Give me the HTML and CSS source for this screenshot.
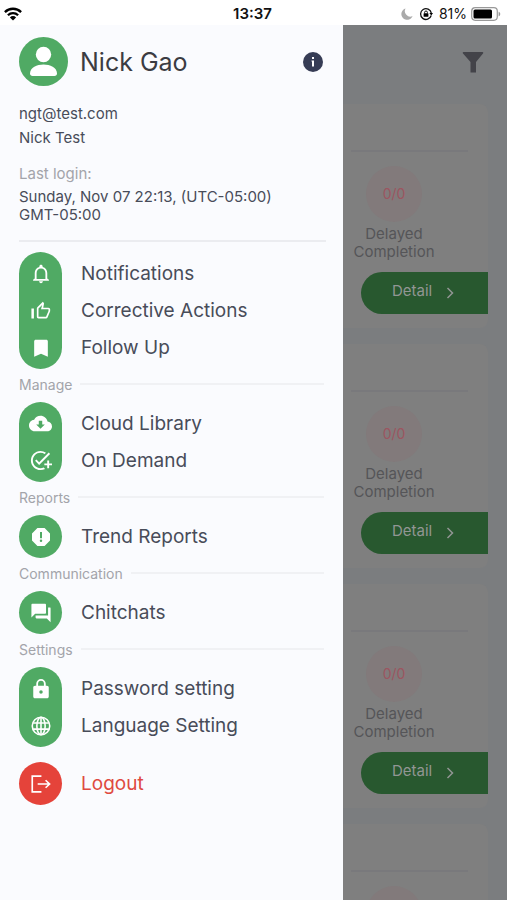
FILE: index.html
```html
<!DOCTYPE html>
<html lang="en">
<head>
<meta charset="utf-8">
<meta name="viewport" content="width=device-width, initial-scale=1">
<title>Account menu</title>
<link rel="stylesheet" href="styles.css">
</head>
<body>
<header class="status">
  <svg class="wifi" viewBox="0 0 18 14" width="18" height="14" aria-label="Wi-Fi"><g fill="none" stroke="#000" stroke-width="2.3"><path d="M.9 5.1a11.5 11.5 0 0 1 16.200 0"/><path d="M3.900 8.300a7.300 7.300 0 0 1 10.200 0"/></g><path d="M9 13.500 5.900 10.400a4.400 4.400 0 0 1 6.200 0z"/></svg>
  <time class="clock">13:37</time>
  <div class="status-right">
    <svg viewBox="0 0 12 12" width="12" height="12" aria-label="Do not disturb"><path fill="#aaa" d="M4.500.5A5.800 5.800 0 1 0 11.600 8.100 5.500 5.500 0 0 1 4.500.5z"/></svg>
    <svg class="lock-rot" viewBox="0 0 14 14" width="14" height="14" aria-label="Rotation lock"><path d="M12.200 8.500A5.400 5.400 0 1 1 12.300 6" fill="none" stroke="#111" stroke-width="1.300"/><path d="M10.400 6h3.600l-1.700 2.500z"/><rect x="4.600" y="6.300" width="4.800" height="3.500" rx=".5"/><path d="M5.600 6.500V5.400a1.400 1.400 0 0 1 2.800 0v1.100" fill="none" stroke="#111"/></svg>
    <span>81%</span>
    <svg viewBox="0 0 30 14" width="30" height="14" aria-label="Battery"><rect x=".7" y=".7" width="25.600" height="12.600" rx="3.500" fill="#fff" stroke="#999" stroke-width="1.200"/><rect x="2.500" y="2.500" width="18.500" height="9" rx="1.500"/><path d="M27.600 4.700c2.200.7 2.200 3.900 0 4.600z" fill="#999"/></svg>
  </div>
</header>
<div class="app">
  <aside class="drawer">
    <div class="profile">
      <svg class="avatar" viewBox="0 0 49 49" width="49" height="49" aria-hidden="true"><circle cx="24.500" cy="24.500" r="24.500" fill="#50aa64"/><circle cx="24.500" cy="17.500" r="7.700" fill="#fff"/><path d="M11 36.500c0-6 7-9 13.500-9s13.500 3 13.500 9c0 1.500-1 2.500-2.500 2.500h-22c-1.500 0-2.500-1-2.500-2.500z" fill="#fff"/></svg>
      <h1>Nick Gao</h1>
      <button class="info" type="button" aria-label="Information"><svg viewBox="0 0 20 20" width="20" height="20"><circle cx="10" cy="10" r="10" fill="#363c55"/><rect x="9" y="5" width="2" height="2" fill="#fff"/><path d="M8.500 8.500H11v6H9V9.500h-.5z" fill="#fff"/></svg></button>
    </div>
    <div class="details">
      <p>ngt@test.com</p>
      <p>Nick Test</p>
      <p class="muted">Last login:</p>
      <p class="login">Sunday, Nov 07 22:13, (UTC-05:00)<br>GMT-05:00</p>
    </div>
    <nav>
      <ul class="group">
        <li><a href="#notifications"><svg viewBox="0 0 24 24"><path d="M12 23c1.300 0 2.300-1 2.300-2.300H9.700C9.700 22 10.700 23 12 23zm7.500-5.500v-6.800c0-3.600-2-6.400-5.500-7.200V2.700C14 1.600 13.100.8 12 .8s-2 .8-2 1.900v.8c-3.500.8-5.500 3.600-5.500 7.200v6.800l-2 1.500v1h19v-1zm-2.200.5H6.700v-7.300c0-3.100 2.100-5.300 5.300-5.300s5.300 2.200 5.300 5.300z"/></svg><span>Notifications</span></a></li>
        <li><a href="#actions"><svg viewBox="0 0 24 24"><path d="M9 21h9c.83 0 1.540-.5 1.840-1.220l3.020-7.050c.09-.23.14-.47.14-.73v-2c0-1.100-.9-2-2-2h-6.310l.95-4.570.03-.32c0-.41-.17-.79-.44-1.060L14.170 1 7.580 7.590C7.220 7.950 7 8.450 7 9v10c0 1.100.9 2 2 2zM9 9l4.340-4.340L12 10h9v2l-3 7H9V9zM.5 9h3v12h-3z"/></svg><span>Corrective Actions</span></a></li>
        <li><a href="#follow"><svg viewBox="0 0 24 24"><path d="M18 2H6C4.500 2 3.800 2.800 3.800 4v18.500L12 18.800l8.200 3.700V4C20.200 2.800 19.500 2 18 2z"/></svg><span>Follow Up</span></a></li>
      </ul>
      <h2>Manage</h2>
      <ul class="group">
        <li><a href="#library"><svg class="wide" viewBox="0 0 24 24"><path d="M19.350 10.040C18.670 6.590 15.640 4 12 4 9.110 4 6.600 5.640 5.350 8.040 2.340 8.360 0 10.910 0 14c0 3.310 2.690 6 6 6h13c2.760 0 5-2.240 5-5 0-2.640-2.050-4.780-4.650-4.960zM16.500 13 12 17.500 7.500 13h2.700V9h3.600v4z"/></svg><span>Cloud Library</span></a></li>
        <li><a href="#demand"><svg class="wide" viewBox="0 0 24 24"><path d="M22 5.180 10.590 16.600l-4.240-4.240 1.410-1.410 2.830 2.830 10-10L22 5.180zM12 20c-4.410 0-8-3.590-8-8s3.590-8 8-8c1.570 0 3.040.46 4.280 1.250l1.450-1.450A10.020 10.020 0 0 0 12 2C6.480 2 2 6.480 2 12s4.480 10 10 10c1.730 0 3.360-.44 4.780-1.220l-1.500-1.500c-1 .46-2.110.72-3.280.72zm7-5h-3v2h3v3h2v-3h3v-2h-3v-3h-2v3z"/></svg><span>On Demand</span></a></li>
      </ul>
      <h2>Reports</h2>
      <ul class="group">
        <li><a href="#trends"><svg viewBox="0 0 24 24"><path fill-rule="evenodd" d="M16.300 1.200H7.700L1.200 7.700v8.600l6.500 6.500h8.600l6.500-6.500V7.700zM10.800 6h2.400v7.500h-2.400zM12 15a1.500 1.500 0 1 1 0 3 1.500 1.500 0 0 1 0-3z"/></svg><span>Trend Reports</span></a></li>
      </ul>
      <h2>Communication</h2>
      <ul class="group">
        <li><a href="#chat"><svg viewBox="0 0 24 24"><path d="M23 5.500h-2.500V15H5.500v2.500c0 .55.450 1 1 1H19l4.500 4.500V6.500c0-.55-.2-1-.5-1zM18 12V2c0-.55-.45-1-1-1H1.500c-.55 0-1 .45-1 1v15.500L5 13h12c.55 0 1-.45 1-1z"/></svg><span>Chitchats</span></a></li>
      </ul>
      <h2>Settings</h2>
      <ul class="group">
        <li><a href="#password"><svg viewBox="0 0 24 24"><path d="M19 8h-1.300V5.700a5.700 5.700 0 0 0-11.400 0V8H5c-1.500 0-2.300.9-2.300 2v11c0 1.200.8 2.200 2.300 2.200h14c1.500 0 2.300-1 2.300-2.200V10c0-1.100-.8-2-2.300-2zM12 17.700a2.100 2.100 0 1 1 0-4.200 2.100 2.100 0 0 1 0 4.200zM15.500 8h-7V5.700a3.500 3.500 0 0 1 7 0z"/></svg><span>Password setting</span></a></li>
        <li><a href="#language"><svg viewBox="0 0 24 24"><g fill="none" stroke="#fff" stroke-width="1.900"><circle cx="12" cy="12" r="10.500"/><ellipse cx="12" cy="12" rx="5" ry="10.500"/><path d="M12 1.500v21M2.500 8.300h19M2.500 15.700h19"/></g></svg><span>Language Setting</span></a></li>
      </ul>
      <ul class="group logout">
        <li><a href="#logout"><svg viewBox="0 0 24 24"><path fill="none" stroke="#fff" stroke-width="2" d="M12.500 2.500h-11v19h11M8 12h14M17.500 7.500 22.300 12l-4.800 4.500"/></svg><span>Logout</span></a></li>
      </ul>
    </nav>
  </aside>
  <main class="page">
    <div class="toolbar"><button type="button" class="filter" aria-label="Filter"><svg viewBox="0 0 22 22" width="22" height="22"><path fill="#434349" d="M1.500 1h19c.8 0 1 .9.500 1.500L14 11v10.500H8.500V11L1 2.500C.5 1.900.7 1 1.500 1z"/></svg></button></div>
    <article class="card">
      <div class="score">0/0</div>
      <p>Delayed Completion</p>
      <button type="button" class="detail">Detail<svg viewBox="0 0 8 12" width="8" height="12"><path d="m1.500 1 5 5-5 5"/></svg></button>
    </article>
    <article class="card">
      <div class="score">0/0</div>
      <p>Delayed Completion</p>
      <button type="button" class="detail">Detail<svg viewBox="0 0 8 12" width="8" height="12"><path d="m1.500 1 5 5-5 5"/></svg></button>
    </article>
    <article class="card">
      <div class="score">0/0</div>
      <p>Delayed Completion</p>
      <button type="button" class="detail">Detail<svg viewBox="0 0 8 12" width="8" height="12"><path d="m1.500 1 5 5-5 5"/></svg></button>
    </article>
    <article class="card">
      <div class="score"></div>
    </article>
  </main>
</div>
</body>
</html>
```
FILE: styles.css
```css
* { box-sizing: border-box; }

body {
  margin: 0;
  height: 100vh;
  display: flex;
  flex-direction: column;
  overflow: hidden;
  background: #fff;
  font-family: Inter, "Liberation Sans", sans-serif;
  color: #484c59;
}

h1, h2, p, ul { margin: 0; padding: 0; font-weight: 400; }
ul { list-style: none; }
svg { display: block; flex: none; }

button {
  border: 0;
  padding: 0;
  background: none;
  font: inherit;
  color: inherit;
}

/* Status bar */
.status {
  flex: none;
  height: 25px;
  padding: 2px 6px 0 4px;
  display: grid;
  grid-template-columns: 1fr auto 1fr;
  align-items: center;
  color: #111;
  font-size: 14px;
}
.clock { font-size: 15px; font-weight: 600; }
.status-right {
  display: flex;
  align-items: center;
  justify-content: flex-end;
  gap: 6px;
}
.status-right span { margin-right: -2px; }

.app { flex: 1; min-height: 0; display: flex; }

/* Drawer */
.drawer {
  flex: 0 0 343px;
  max-width: 80%;
  padding: 12px 17px 0 19px;
  background: #fafbfe;
}
.profile { display: flex; align-items: center; gap: 12px; }
h1 { flex: 1; font-size: 25px; line-height: 48px; color: #3b3c42; }
.info { margin-right: 3px; }

.details {
  padding: 16px 0;
  border-bottom: 2px solid #ebecf0;
  font-size: 15px;
  line-height: 24px;
}
.muted { margin-top: 12px; color: #a3a4aa; }
.login { padding-top: 2px; line-height: 18px; }

nav { padding-top: 10px; }
.group { position: relative; padding: 3px 0; }
.group::before {
  content: "";
  position: absolute;
  inset: 0 auto 0 0;
  width: 43px;
  border-radius: 22px;
  background: #50aa64;
}
.group a {
  position: relative;
  display: grid;
  grid-template-columns: 43px 1fr;
  column-gap: 19px;
  align-items: center;
  height: 37px;
  font-size: 19px;
  color: inherit;
  text-decoration: none;
}
.group svg { width: 20px; height: 20px; fill: #fff; justify-self: center; }
.group svg.wide { width: 23px; height: 23px; }
.logout { margin-top: 15px; color: #df4a40; }
.logout::before { background: #e5433a; }

h2 {
  display: flex;
  align-items: center;
  gap: 8px;
  height: 33px;
  padding: 0 2px 3px 0;
  font-size: 14px;
  color: #a3a4aa;
}
h2::after { content: ""; flex: 1; height: 2px; background: #f0f1f4; }

/* Dimmed page behind the drawer */
.page {
  flex: 1;
  min-width: 0;
  overflow: hidden;
  padding-right: 19px;
  background: #7b7d7f;
  color: #555558;
}
.toolbar {
  height: 79px;
  padding: 26px 4px 0 0;
  display: flex;
  justify-content: flex-end;
  align-items: flex-start;
}
.card {
  display: flex;
  flex-direction: column;
  align-items: flex-end;
  height: 224px;
  margin-bottom: 16px;
  border-radius: 0 8px 8px 0;
  background: #7f7f7f;
  font-size: 15px;
  line-height: 18px;
}
.card::before {
  content: "";
  align-self: stretch;
  margin: 46px 20px 14px 8px;
  height: 2px;
  flex: none;
  background: #79797c;
}
.score {
  flex: none;
  width: 56px;
  height: 56px;
  margin-right: 66px;
  border-radius: 50%;
  background: #827a7b;
  color: #9c5560;
  font-size: 14px;
  line-height: 56px;
  text-align: center;
}
.card p { width: 90px; margin: 3px 49px 0 0; text-align: center; }
.detail {
  display: flex;
  align-items: center;
  gap: 14px;
  width: 127px;
  height: 42px;
  margin-top: 11px;
  padding: 0 0 4px 31px;
  border-radius: 21px 0 0 21px;
  background: #28582f;
  color: #929694;
}
.detail svg { fill: none; stroke: #929694; stroke-width: 1.5; margin-top: 3px; }
```
